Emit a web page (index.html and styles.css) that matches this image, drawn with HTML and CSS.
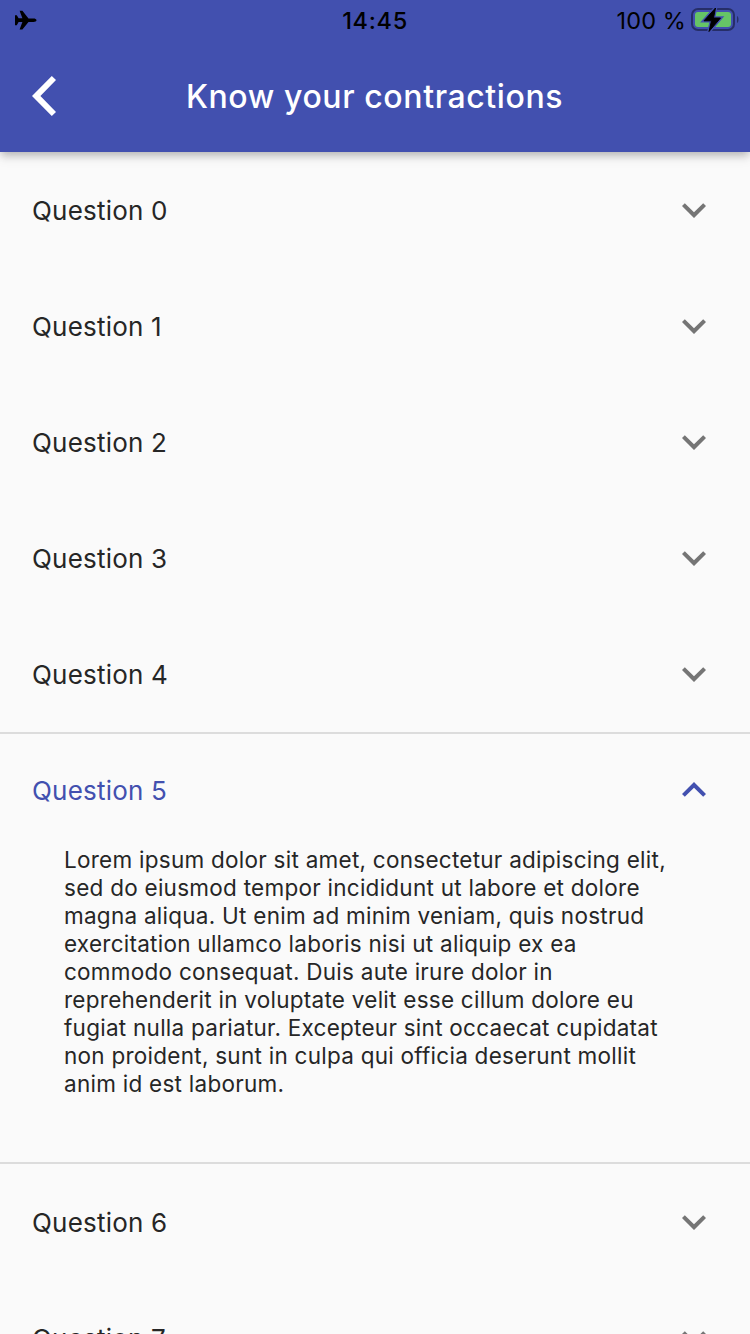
FILE: index.html
```html
<!DOCTYPE html>
<html lang="en">
<head>
<meta charset="utf-8">
<title>Know your contractions</title>
<link rel="stylesheet" href="styles.css">
</head>
<body>
<svg class="defs" width="0" height="0">
  <symbol id="more" viewBox="0 0 24 24"><path d="M16.59 8.59L12 13.17 7.41 8.59 6 10l6 6 6-6z"/></symbol>
  <symbol id="less" viewBox="0 0 24 24"><path d="M12 8l-6 6 1.41 1.41L12 10.83l4.59 4.58L18 14z"/></symbol>
</svg>
<div class="screen">
  <header class="header">
    <div class="status">
      <svg class="plane" width="22" height="20" viewBox="0 0 22 20"><path d="M21.500 10.200c0-1-1.500-1.700-3-1.700h-5L7.400.8H4.600L7.400 8.300H3.600L1.800 5.200H0v10h1.800l1.800-3.100h3.800L4.600 19.600h2.800l6.100-7.700h5c1.500 0 3-.7 3-1.700z"/></svg>
      <span class="clock">14:45</span>
      <div class="power">
        <span class="percent">100 %</span>
        <svg class="battery" width="50" height="28" viewBox="0 0 50 28">
          <rect x="2" y="3" width="42" height="21" rx="6" fill="none" stroke="#262e68" stroke-width="2"/>
          <path d="M47 10c2 .7 2 6.300 0 7z" fill="#262e68"/>
          <rect x="5" y="6" width="36" height="15" rx="3" fill="#66c466"/>
          <path d="M25.500 2L14 14.800h7.500L19 25.500 30.500 12h-7z" fill="#000" stroke="#4250af" stroke-width="3.500"/>
          <path d="M25.500 2L14 14.800h7.500L19 25.500 30.500 12h-7z" stroke="#000" stroke-linejoin="round"/>
        </svg>
      </div>
    </div>
    <div class="appbar">
      <svg class="back" width="48" height="48" viewBox="0 0 24 24"><path d="M12 4L9.900 2 0 12l9.900 10L12 20 4.200 12z"/></svg>
      <h1 class="title">Know your contractions</h1>
    </div>
  </header>
  <main class="list">
    <div class="row"><span>Question 0</span><svg class="chevron"><use href="#more"/></svg></div>
    <div class="row"><span>Question 1</span><svg class="chevron"><use href="#more"/></svg></div>
    <div class="row"><span>Question 2</span><svg class="chevron"><use href="#more"/></svg></div>
    <div class="row"><span>Question 3</span><svg class="chevron"><use href="#more"/></svg></div>
    <div class="row"><span>Question 4</span><svg class="chevron"><use href="#more"/></svg></div>
    <section class="open">
      <div class="row active"><span>Question 5</span><svg class="chevron"><use href="#less"/></svg></div>
      <p class="answer">Lorem ipsum dolor sit amet, consectetur adipiscing elit,<br>sed do eiusmod tempor incididunt ut labore et dolore<br>magna aliqua. Ut enim ad minim veniam, quis nostrud<br>exercitation ullamco laboris nisi ut aliquip ex ea<br>commodo consequat. Duis aute irure dolor in<br>reprehenderit in voluptate velit esse cillum dolore eu<br>fugiat nulla pariatur. Excepteur sint occaecat cupidatat<br>non proident, sunt in culpa qui officia deserunt mollit<br>anim id est laborum.</p>
    </section>
    <div class="row"><span>Question 6</span><svg class="chevron"><use href="#more"/></svg></div>
    <div class="row"><span>Question 7</span><svg class="chevron"><use href="#more"/></svg></div>
  </main>
</div>
</body>
</html>
```
FILE: styles.css
```css
* { box-sizing: border-box; }
body { margin: 0; font-family: Inter, Roboto, sans-serif; }
svg { display: block; }
.defs { position: absolute; }
.screen {
  display: flex;
  flex-direction: column;
  width: 750px;
  height: 1334px;
  overflow: hidden;
  background: #fafafa;
}
.header {
  position: relative;
  flex: none;
  height: 152px;
  background: #4250af;
  box-shadow: 0 4px 8px -2px rgba(0,0,0,.18), 0 8px 10px rgba(0,0,0,.06), 0 2px 10px rgba(0,0,0,.1);
}
.status {
  display: grid;
  grid-template-columns: 1fr auto 1fr;
  align-items: center;
  height: 40px;
  padding: 0 12px 0 15px;
  color: #000;
}
.clock {
  padding: 2px 3px 0 0;
  font-size: 23.5px;
  line-height: 38px;
  font-weight: 500;
  letter-spacing: 0.7px;
}
.power {
  display: flex;
  justify-content: flex-end;
  align-items: center;
  gap: 4px;
  margin-right: -11px;
}
.percent {
  font-size: 23.5px;
  letter-spacing: 0.1px;
  white-space: nowrap;
}
.battery { margin-right: 9px; }
.appbar {
  display: grid;
  grid-template-columns: 48px 1fr 48px;
  align-items: center;
  height: 112px;
  padding: 0 33px 0 32px;
}
.back { fill: #fff; }
.title {
  margin: 0;
  padding-top: 2px;
  font-size: 32px;
  line-height: 40px;
  font-weight: 500;
  letter-spacing: 0.6px;
  color: #fff;
  text-align: center;
  white-space: nowrap;
}
.list { flex: none; }
.row {
  display: flex;
  align-items: center;
  justify-content: space-between;
  height: 116px;
  padding: 0 32px;
  font-size: 26px;
  letter-spacing: 0.2px;
  color: #262626;
}
.chevron {
  width: 48px;
  height: 48px;
  fill: #757575;
}
.open {
  height: 432px;
  border-top: 2px solid #dcdcdc;
  border-bottom: 2px solid #dcdcdc;
}
.active {
  height: 112px;
  color: #4250af;
}
.active .chevron { fill: #4250af; }
.answer {
  margin: 0;
  padding: 0 64px;
  font-size: 22.5px;
  line-height: 28px;
  letter-spacing: 0.26px;
  color: #262626;
  white-space: nowrap;
}
```
